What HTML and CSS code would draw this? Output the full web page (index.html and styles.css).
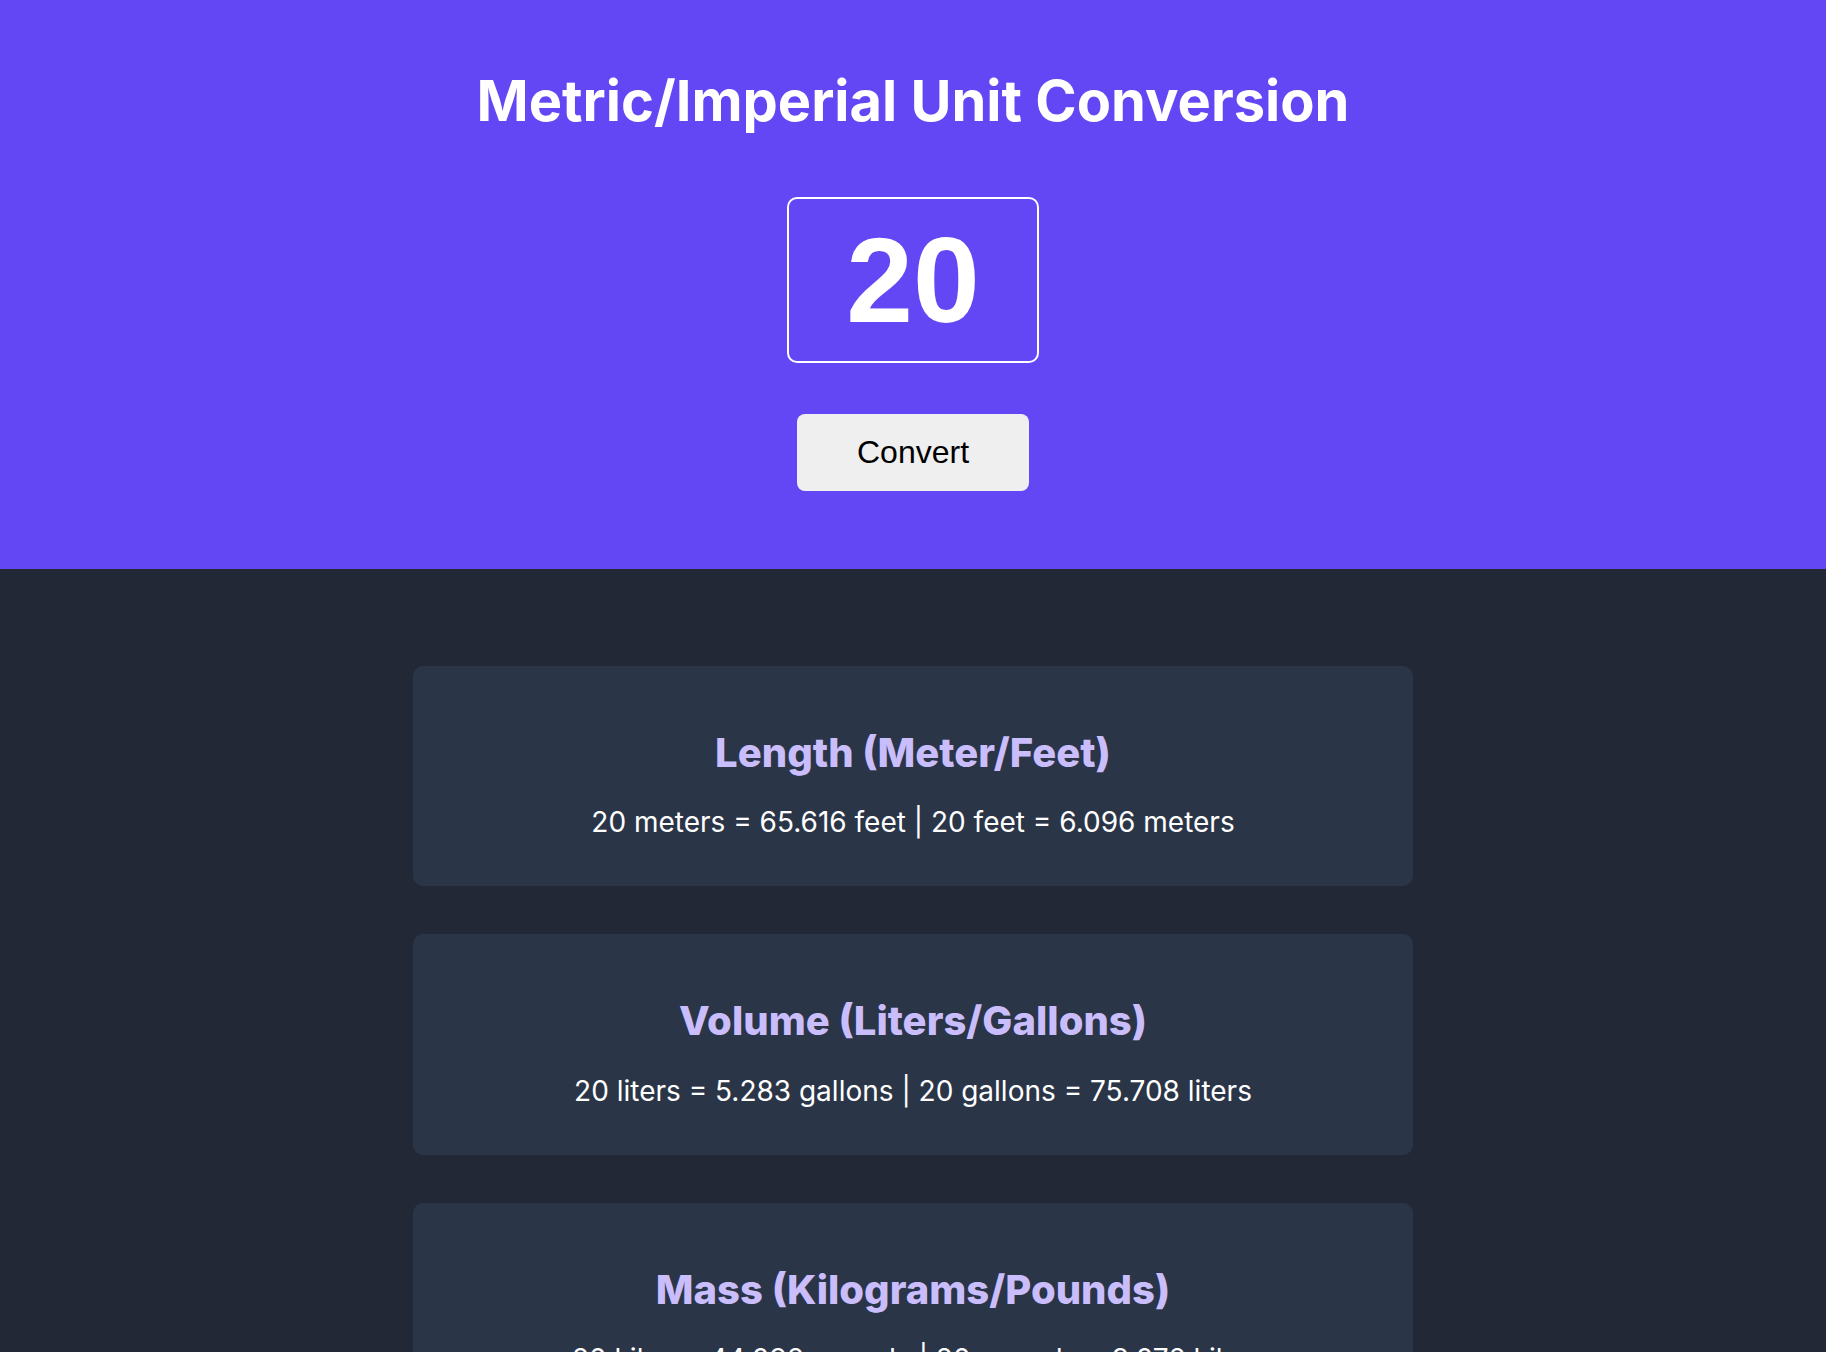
FILE: index.html
```html
<!DOCTYPE html>
<html lang="en">
<head>
<meta charset="utf-8">
<title>Metric/Imperial Unit Conversion</title>
<link rel="stylesheet" href="styles.css">
</head>
<body>
<header class="hero">
  <h1 class="hero-title">Metric/Imperial Unit Conversion</h1>
  <input class="amount" type="text" value="20">
  <button class="convert-btn" type="button">Convert</button>
</header>
<main class="results">
  <section class="card">
    <h2 class="card-title">Length (Meter/Feet)</h2>
    <p class="card-text">20 meters = 65.616 feet | 20 feet = 6.096 meters</p>
  </section>
  <section class="card">
    <h2 class="card-title">Volume (Liters/Gallons)</h2>
    <p class="card-text">20 liters = 5.283 gallons | 20 gallons = 75.708 liters</p>
  </section>
  <section class="card">
    <h2 class="card-title">Mass (Kilograms/Pounds)</h2>
    <p class="card-text">20 kilos = 44.092 pounds | 20 pounds = 9.072 kilos</p>
  </section>
</main>
</body>
</html>
```

FILE: styles.css
```css
* { box-sizing: border-box; }

html, body {
  margin: 0;
  padding: 0;
}

body {
  background: #222836;
  font-family: "Inter", "Noto Sans", sans-serif;
  color: #ffffff;
}

.hero {
  background: #6347f5;
  padding: 67px 0 78px;
  display: flex;
  flex-direction: column;
  align-items: center;
}

.hero-title {
  margin: 0;
  font-size: 56px;
  font-weight: 700;
  line-height: 68px;
  color: #ffffff;
}

.amount {
  margin-top: 62px;
  width: 252px;
  height: 166px;
  border: 2px solid #ffffff;
  border-radius: 10px;
  background: transparent;
  color: #ffffff;
  font-family: "Liberation Sans", Arial, sans-serif;
  font-weight: 700;
  font-size: 120px;
  text-align: center;
  padding: 0;
  outline: none;
}

.convert-btn {
  margin-top: 51px;
  width: 232px;
  height: 77px;
  border: none;
  border-radius: 8px;
  background: #efefef;
  color: #000000;
  font-family: "Liberation Sans", Arial, sans-serif;
  font-size: 32px;
  padding: 0;
}

.results {
  padding: 97px 0 60px;
  display: flex;
  flex-direction: column;
  align-items: center;
  gap: 48px;
}

.card {
  width: 1000px;
  background: #2b3548;
  border-radius: 10px;
  padding: 63px 20px 46px;
  text-align: center;
}

.card-title {
  margin: 0 0 29px;
  font-size: 40px;
  font-weight: 800;
  color: #c9befb;
  line-height: 1.21;
}

.card-text {
  margin: 0;
  font-size: 28px;
  line-height: 1.21;
  color: #ffffff;
}
```
